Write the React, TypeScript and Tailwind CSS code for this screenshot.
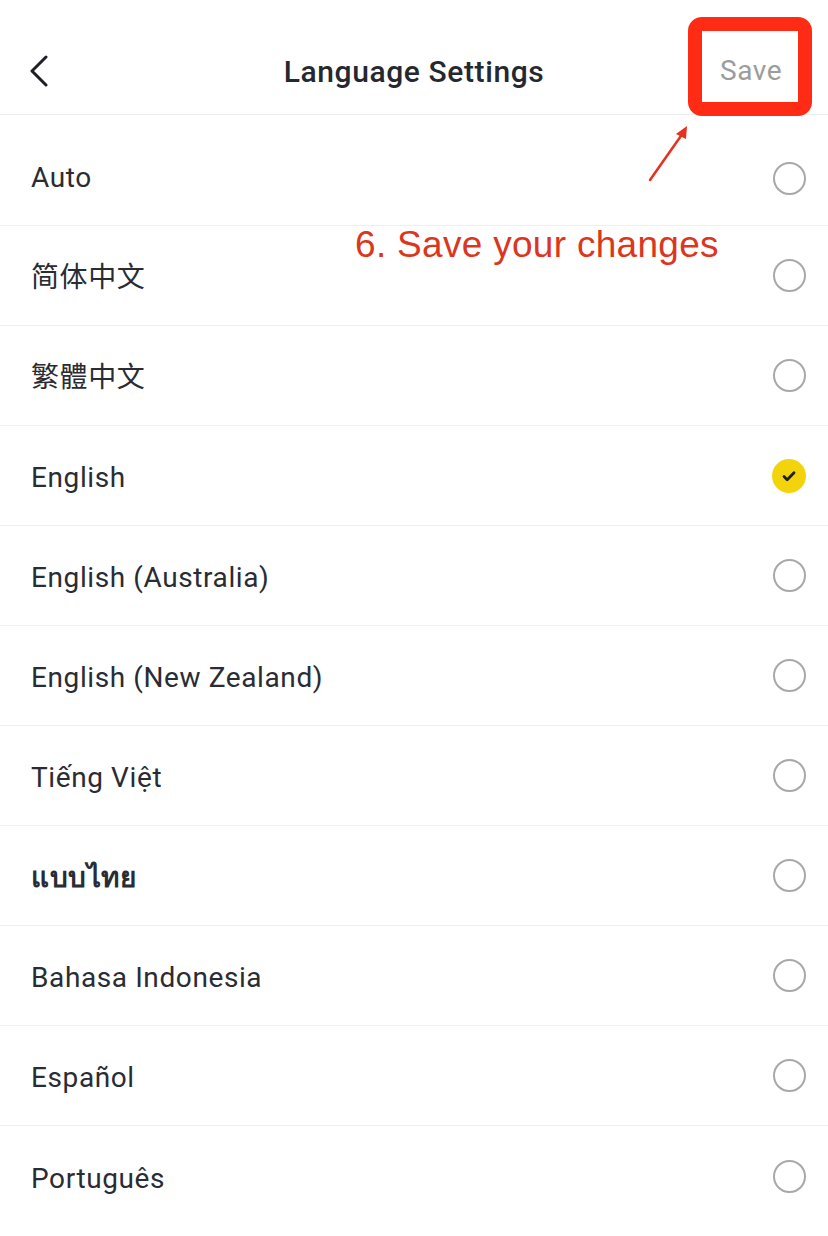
const languages = [
  'Auto',
  '简体中文',
  '繁體中文',
  'English',
  'English (Australia)',
  'English (New Zealand)',
  'Tiếng Việt',
  'แบบไทย',
  'Bahasa Indonesia',
  'Español',
  'Português',
];

const selected = 'English';

function Radio({ checked }: { checked: boolean }) {
  if (checked) {
    return (
      <div className="w-[34px] h-[34px] rounded-full bg-[#f3d40c] flex items-center justify-center">
        <svg width="16" height="16" viewBox="0 0 16 16" fill="none">
          <path d="M3 8.5l3.2 3.2L13 4.8" stroke="#1e2026" strokeWidth="2.8" strokeLinecap="round" strokeLinejoin="round" />
        </svg>
      </div>
    );
  }
  return <div className="w-[33px] h-[33px] rounded-full border-[2.5px] border-[#a8a8a8]" />;
}

export default function App() {
  return (
    <div className="relative w-[828px] h-[1236px] bg-white overflow-hidden font-['Roboto','Noto_Sans_CJK_SC',sans-serif]">
      {/* Header */}
      <div className="relative h-[115px] flex items-center justify-between border-b border-[#ededed] pt-[28px] pl-[28px] pr-[46px]">
        <svg width="22" height="32" viewBox="0 0 22 32" fill="none">
          <path d="M18 2L4 16l14 14" stroke="#1e2026" strokeWidth="3" strokeLinecap="round" strokeLinejoin="round" />
        </svg>
        <h1 className="absolute left-0 right-0 text-center text-[30px] font-medium text-[#252830] tracking-[0.6px] pointer-events-none">
          Language Settings
        </h1>
        <span className="text-[28px] text-[#9c9c9c] tracking-[0.5px]">Save</span>
      </div>

      {/* List */}
      <div>
        {languages.map((lang, i) => (
          <div
            key={lang}
            className={`flex items-center justify-between pl-[31px] pr-[22px] ${
              i === languages.length - 1 ? '' : 'border-b border-[#efefef]'
            } ${i === 0 ? 'h-[111px] pt-[16px]' : 'h-[100px]'}`}
          >
            <span
              className={`text-[28px] text-[#2a2c33] tracking-[0.6px] ${i === 0 ? '' : 'pt-[5px]'} ${
                lang === 'แบบไทย' ? 'font-bold' : ''
              }`}
            >
              {lang}
            </span>
            <Radio checked={lang === selected} />
          </div>
        ))}
      </div>

      {/* Annotation */}
      <div className="absolute left-[688px] top-[17px] w-[124px] h-[99px] rounded-[14px] border-[14px] border-[#ff2b14]" />
      <svg className="absolute left-[640px] top-[120px]" width="60" height="70" viewBox="0 0 60 70" fill="none">
        <path d="M10 60L43 13" stroke="#e8301c" strokeWidth="2.5" strokeLinecap="round" />
        <path d="M47 6L36 14l10 5z" fill="#e8301c" />
      </svg>
      <div className="absolute left-[355px] top-[221px] text-[37px] leading-[48px] tracking-[0.3px] text-[#dc3520] font-['Liberation_Sans',sans-serif]">
        6. Save your changes
      </div>
    </div>
  );
}
